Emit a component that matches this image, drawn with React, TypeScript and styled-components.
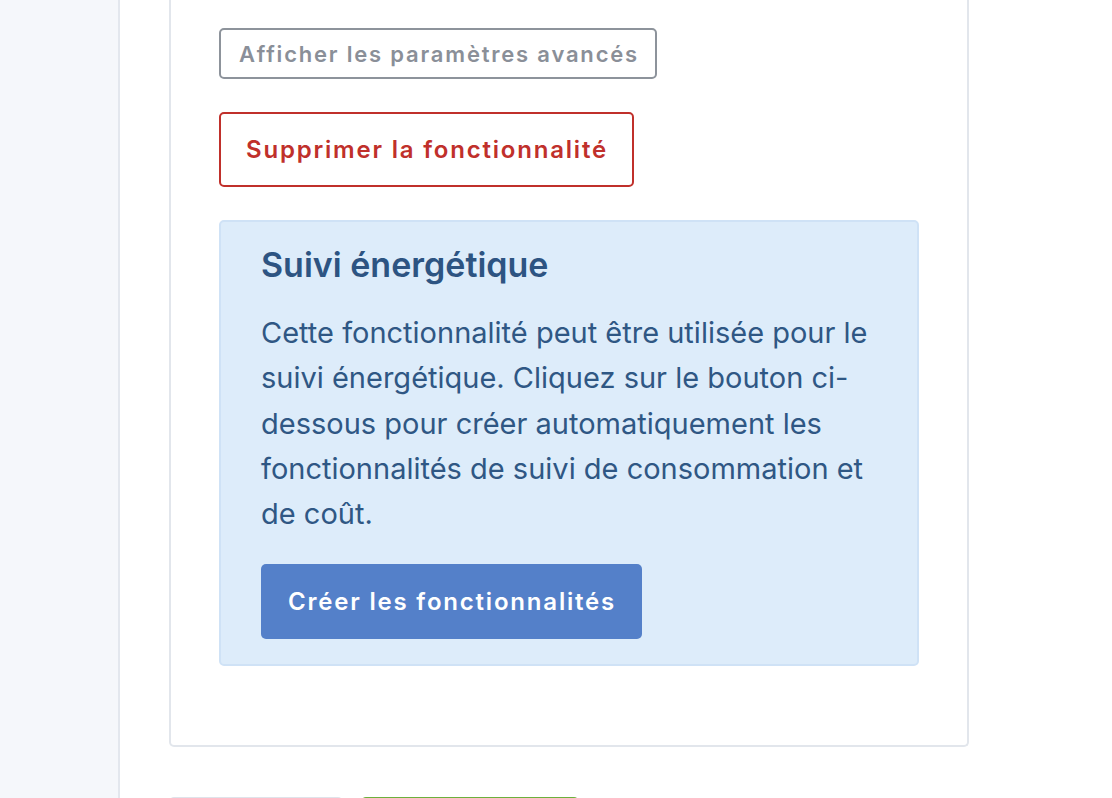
import React from "react";
import styled, { createGlobalStyle } from "styled-components";

const Global = createGlobalStyle`
  html, body { margin: 0; padding: 0; background: #ffffff; }
  body { font-family: Inter, "Noto Sans", "Liberation Sans", sans-serif; -webkit-font-smoothing: antialiased; }
  * { box-sizing: border-box; }
`;

const Page = styled.div`
  display: flex;
  height: 798px;
  overflow: hidden;
`;

const Sidebar = styled.aside`
  width: 120px;
  flex: none;
  background: #f5f7fb;
  border-right: 2px solid #e3e7ee;
`;

const Main = styled.main`
  flex: 1;
  display: flex;
  flex-direction: column;
  padding-left: 49px;
`;

const Card = styled.section`
  width: 800px;
  border: 2px solid #e2e6ec;
  border-top: none;
  border-radius: 0 0 5px 5px;
  padding: 28px 48px 79px;
  display: flex;
  flex-direction: column;
  align-items: flex-start;
  gap: 33px;
`;

const OutlineButton = styled.button<{ $tone: "gray" | "red"; $size: "sm" | "lg" }>`
  font-family: Inter, "Noto Sans", "Liberation Sans", sans-serif;
  font-weight: 600;
  font-size: ${(p) => (p.$size === "lg" ? "24px" : "22px")};
  letter-spacing: 1.8px;
  background: #ffffff;
  border-radius: 5px;
  cursor: pointer;
  color: ${(p) => (p.$tone === "red" ? "#c0302b" : "#8a8f98")};
  border: 2px solid ${(p) => (p.$tone === "red" ? "#c0302b" : "#8d939b")};
  height: ${(p) => (p.$size === "lg" ? "75px" : "51px")};
  padding: ${(p) => (p.$size === "lg" ? "0 24px 0 25px" : "0 16px 0 18px")};
`;

const Notice = styled.div`
  align-self: stretch;
  background: #ddecfa;
  border: 2px solid #cfe2f6;
  border-radius: 5px;
  padding: 23px 40px 25px;
  color: #2f5784;
`;

const NoticeTitle = styled.h3`
  margin: 0 0 25px;
  font-size: 34px;
  line-height: 40px;
  font-weight: 600;
  color: #2d5482;
`;

const NoticeText = styled.p`
  margin: 0 0 28px;
  font-size: 29px;
  line-height: 45.3px;
  font-weight: 400;
`;

const PrimaryButton = styled.button`
  font-family: Inter, "Noto Sans", "Liberation Sans", sans-serif;
  font-weight: 600;
  font-size: 24px;
  letter-spacing: 1.8px;
  color: #ffffff;
  background: #5480c9;
  border: none;
  border-radius: 5px;
  height: 75px;
  padding: 0 26px 0 27px;
  cursor: pointer;
`;

const Footer = styled.div`
  display: flex;
  gap: 18px;
  margin-top: 50px;
`;

const FooterButton = styled.button<{ $variant: "neutral" | "success" }>`
  font-family: Inter, "Noto Sans", "Liberation Sans", sans-serif;
  font-weight: 600;
  font-size: 22px;
  height: 75px;
  border-radius: 5px;
  padding: 0 26px;
  background: ${(p) => (p.$variant === "success" ? "#6cb03c" : "#ffffff")};
  color: ${(p) => (p.$variant === "success" ? "#ffffff" : "#5b6270")};
  border: 2px solid ${(p) => (p.$variant === "success" ? "#6cb03c" : "#dfe3ea")};
  width: ${(p) => (p.$variant === "success" ? "218px" : "174px")};
`;

export default function App() {
  return (
    <>
      <Global />
      <Page>
        <Sidebar />
        <Main>
          <Card>
            <OutlineButton $tone="gray" $size="sm">Afficher les paramètres avancés</OutlineButton>
            <OutlineButton $tone="red" $size="lg">Supprimer la fonctionnalité</OutlineButton>
            <Notice>
              <NoticeTitle>Suivi énergétique</NoticeTitle>
              <NoticeText>
                Cette fonctionnalité peut être utilisée pour le suivi énergétique. Cliquez sur le bouton
                ci-dessous pour créer automatiquement les fonctionnalités de suivi de consommation et de
                coût.
              </NoticeText>
              <PrimaryButton>Créer les fonctionnalités</PrimaryButton>
            </Notice>
          </Card>
          <Footer>
            <FooterButton $variant="neutral">Annuler</FooterButton>
            <FooterButton $variant="success">Enregistrer</FooterButton>
          </Footer>
        </Main>
      </Page>
    </>
  );
}
